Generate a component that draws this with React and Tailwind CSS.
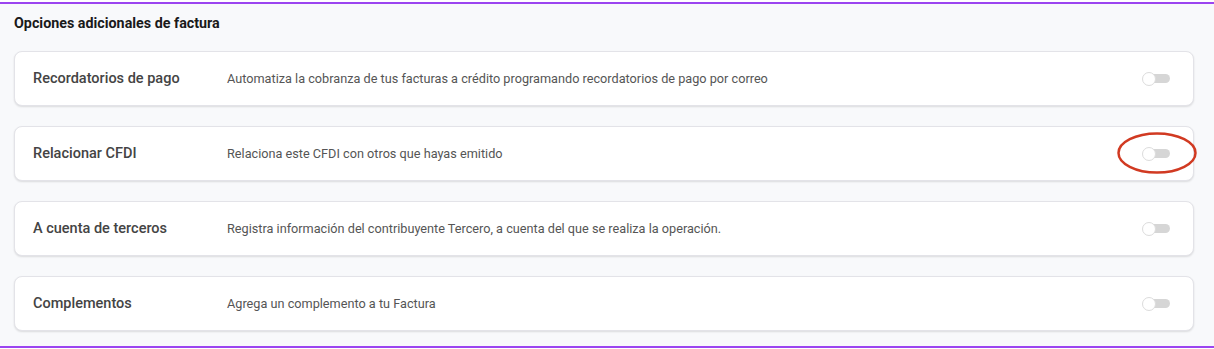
const OPTIONS = [
  { title: 'Recordatorios de pago', desc: 'Automatiza la cobranza de tus facturas a crédito programando recordatorios de pago por correo' },
  { title: 'Relacionar CFDI', desc: 'Relaciona este CFDI con otros que hayas emitido', marked: true },
  { title: 'A cuenta de terceros', desc: 'Registra información del contribuyente Tercero, a cuenta del que se realiza la operación.' },
  { title: 'Complementos', desc: 'Agrega un complemento a tu Factura' },
]

function Toggle() {
  return (
    <div className="relative w-[28px] h-[14px] flex items-center">
      <div className="absolute left-[6px] right-0 h-[9px] rounded-full bg-[#d6d6d6]" />
      <div className="absolute left-0 w-[14px] h-[14px] rounded-full bg-white border border-[#dcdcdc]" />
    </div>
  )
}

export default function App() {
  return (
    <div className="w-[1214px] h-[349px] bg-white pt-[2px] font-['Roboto',sans-serif]">
      <div className="h-[346px] bg-[#f8f9fb] border-t-2 border-b-2 border-[#9b45f0] flex flex-col px-[14px] pr-[20px]">
        <h2 className="text-[14.3px] font-bold text-[#1a1a1a] pt-[10px] leading-[18px]">Opciones adicionales de factura</h2>
        <div className="flex flex-col gap-[20px] mt-[19px]">
          {OPTIONS.map((o) => (
            <div key={o.title} className="relative h-[55px] bg-white rounded-[8px] border border-[#e3e3e8] shadow-[0_1px_2px_rgba(0,0,0,0.12)] flex items-center pl-[18px] pr-[23px]">
              <div className="w-[194px] text-[14.5px] font-medium text-[#444]">{o.title}</div>
              <div className="flex-1 text-[12.7px] text-[#555]">{o.desc}</div>
              <Toggle />
              {o.marked && (
                <svg className="absolute right-[-4px] top-[5px] overflow-visible" width="80" height="42" viewBox="0 0 80 42">
                  <ellipse cx="40" cy="21" rx="38.5" ry="19.5" fill="none" stroke="#d13a22" strokeWidth="2.5" />
                </svg>
              )}
            </div>
          ))}
        </div>
      </div>
    </div>
  )
}
